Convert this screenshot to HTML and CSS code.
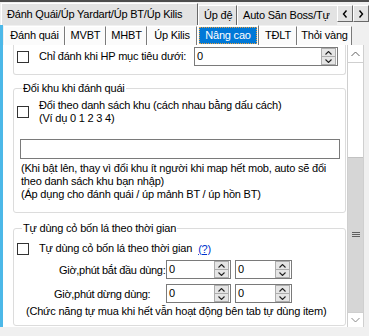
FILE: index.html
```html
<!DOCTYPE html>
<html lang="vi">
<head>
    <meta charset="utf-8">
    <title>Nâng cao</title>
    <link rel="stylesheet" href="styles.css">
</head>
<body>
<div class="window">
    <div class="topline"></div>
    <div class="main-tabs">
        <div class="main-tab-list">
            <div class="main-tab active t1">Đánh Quái/Úp Yardart/Úp BT/Úp Kilis</div>
            <div class="main-tab t2">Úp đệ</div>
            <div class="main-tab t3">Auto Săn Boss/Tự</div>
        </div>
        <div class="tab-arrows">
            <div class="arrow-btn"><svg width="6" height="8" viewBox="0 0 6 8"><polyline points="4.5,0.5 1.5,4 4.5,7.5" fill="none" stroke="#000" stroke-width="1.4"/></svg></div>
            <div class="arrow-btn"><svg width="6" height="8" viewBox="0 0 6 8"><polyline points="1.5,0.5 4.5,4 1.5,7.5" fill="none" stroke="#000" stroke-width="1.4"/></svg></div>
        </div>
    </div>
    <div class="frame">
        <div class="stripe"></div>
        <div class="frame-body">
            <div class="sub-tabs">
                <div class="sub-tab w61">Đánh quái</div>
                <div class="sub-tab w41">MVBT</div>
                <div class="sub-tab w41">MHBT</div>
                <div class="sub-tab w50">Úp Kilis</div>
                <div class="sub-tab w62 active"><span>Nâng cao</span></div>
                <div class="sub-tab w38">TĐLT</div>
                <div class="sub-tab w55">Thỏi vàng</div>
            </div>
            <div class="page-row">
                <div class="page">
                    <!-- nhóm trên, bị cuộn mất phần đầu -->
                    <div class="group-cut">
                        <div class="row">
                            <span class="check"></span>
                            <span class="check-label">Chỉ đánh khi HP mục tiêu dưới:</span>
                            <div class="num num-wide">
                                <div class="num-val">0</div>
                                <div class="num-spin">
                                    <div class="spin-btn"><svg width="7" height="4" viewBox="0 0 7 4"><polyline points="0.5,3.5 3.5,0.5 6.5,3.5" fill="none" stroke="#222" stroke-width="1.1"/></svg></div>
                                    <div class="spin-btn"><svg width="7" height="4" viewBox="0 0 7 4"><polyline points="0.5,0.5 3.5,3.5 6.5,0.5" fill="none" stroke="#222" stroke-width="1.1"/></svg></div>
                                </div>
                            </div>
                        </div>
                    </div>

                    <fieldset class="group g-zone">
                        <legend>Đổi khu khi đánh quái</legend>
                        <div class="check-row">
                            <span class="check"></span>
                            <span class="check-label">Đổi theo danh sách khu (cách nhau bằng dấu cách)<br>(Ví dụ 0 1 2 3 4)</span>
                        </div>
                        <div class="textbox"></div>
                        <div class="note">(Khi bật lên, thay vì đổi khu ít người khi map hết mob, auto sẽ đổi<br>theo danh sách khu bạn nhập)<br>(Áp dụng cho đánh quái / úp mảnh BT / úp hồn BT)</div>
                    </fieldset>

                    <fieldset class="group g-clover">
                        <legend>Tự dùng cỏ bốn lá theo thời gian</legend>
                        <div class="check-row single">
                            <span class="check"></span>
                            <span class="check-label">Tự dùng cỏ bốn lá theo thời gian</span>
                            <a class="help" href="#">(?)</a>
                        </div>
                        <div class="time-row">
                            <span class="time-label">Giờ,phút bắt đầu dùng:</span>
                            <div class="num num-a">
                                <div class="num-val">0</div>
                                <div class="num-spin">
                                    <div class="spin-btn"><svg width="7" height="4" viewBox="0 0 7 4"><polyline points="0.5,3.5 3.5,0.5 6.5,3.5" fill="none" stroke="#222" stroke-width="1.1"/></svg></div>
                                    <div class="spin-btn"><svg width="7" height="4" viewBox="0 0 7 4"><polyline points="0.5,0.5 3.5,3.5 6.5,0.5" fill="none" stroke="#222" stroke-width="1.1"/></svg></div>
                                </div>
                            </div>
                            <div class="num num-b">
                                <div class="num-val">0</div>
                                <div class="num-spin">
                                    <div class="spin-btn"><svg width="7" height="4" viewBox="0 0 7 4"><polyline points="0.5,3.5 3.5,0.5 6.5,3.5" fill="none" stroke="#222" stroke-width="1.1"/></svg></div>
                                    <div class="spin-btn"><svg width="7" height="4" viewBox="0 0 7 4"><polyline points="0.5,0.5 3.5,3.5 6.5,0.5" fill="none" stroke="#222" stroke-width="1.1"/></svg></div>
                                </div>
                            </div>
                        </div>
                        <div class="time-row">
                            <span class="time-label stop">Giờ,phút dừng dùng:</span>
                            <div class="num num-a">
                                <div class="num-val">0</div>
                                <div class="num-spin">
                                    <div class="spin-btn"><svg width="7" height="4" viewBox="0 0 7 4"><polyline points="0.5,3.5 3.5,0.5 6.5,3.5" fill="none" stroke="#222" stroke-width="1.1"/></svg></div>
                                    <div class="spin-btn"><svg width="7" height="4" viewBox="0 0 7 4"><polyline points="0.5,0.5 3.5,3.5 6.5,0.5" fill="none" stroke="#222" stroke-width="1.1"/></svg></div>
                                </div>
                            </div>
                            <div class="num num-b">
                                <div class="num-val">0</div>
                                <div class="num-spin">
                                    <div class="spin-btn"><svg width="7" height="4" viewBox="0 0 7 4"><polyline points="0.5,3.5 3.5,0.5 6.5,3.5" fill="none" stroke="#222" stroke-width="1.1"/></svg></div>
                                    <div class="spin-btn"><svg width="7" height="4" viewBox="0 0 7 4"><polyline points="0.5,0.5 3.5,3.5 6.5,0.5" fill="none" stroke="#222" stroke-width="1.1"/></svg></div>
                                </div>
                            </div>
                        </div>
                        <div class="note small">(Chức năng tự mua khi hết vẫn hoạt động bên tab tự dùng item)</div>
                    </fieldset>
                </div>
                <div class="vscroll">
                    <div class="sb-btn up"><svg width="9" height="6" viewBox="0 0 9 6"><polyline points="0.5,5 4.5,1 8.5,5" fill="none" stroke="#606060" stroke-width="1"/></svg></div>
                    <div class="sb-track"></div>
                    <div class="sb-thumb"><svg width="8" height="6" viewBox="0 0 8 6"><path d="M0 0.5H8M0 2.5H8M0 4.5H8" stroke="#606060" stroke-width="1"/></svg></div>
                    <div class="sb-btn down"><svg width="9" height="6" viewBox="0 0 9 6"><polyline points="0.5,1 4.5,5 8.5,1" fill="none" stroke="#8a8a8a" stroke-width="1"/></svg></div>
                </div>
                <div class="edge"></div>
            </div>
        </div>
    </div>
    <div class="bottom"></div>
</div>
</body>
</html>
```

FILE: styles.css
```css
* {
    box-sizing: border-box;
}
body {
    margin: 0;
    background-color: #f0f0f0;
    font-family: "Liberation Sans", Arial, sans-serif;
    font-size: 11px;
    letter-spacing: -0.2px;
    color: #000;
}
.window {
    width: 369px;
    height: 336px;
    overflow: hidden;
    display: flex;
    flex-direction: column;
}
.topline {
    height: 2px;
    background-color: #4d4d4d;
}

/* tab ngoài */
.main-tabs {
    height: 23px;
    display: flex;
    background-color: #f0f0f0;
}
.main-tab-list {
    flex: 1;
    display: flex;
    align-items: flex-end;
    overflow: hidden;
    padding-left: 1px;
}
.main-tab {
    flex-shrink: 0;
    height: 20px;
    line-height: 18px;
    padding: 0 5px;
    white-space: nowrap;
    background-color: #e3e3e3;
    border-top: 1px solid #fff;
    border-left: 1px solid #fff;
    border-right: 1px solid #696969;
}
.main-tab.active {
    height: 22px;
    line-height: 21px;
}
.main-tab.t1 {
    width: 197px;
}
.main-tab.t2 {
    width: 39px;
}
.main-tab.t3 {
    width: 110px;
}
.tab-arrows {
    display: flex;
    padding-top: 3px;
}
.arrow-btn {
    width: 16px;
    height: 17px;
    display: flex;
    align-items: center;
    justify-content: center;
    background-color: #e3e3e3;
    border: 1px solid;
    border-color: #fff #696969 #696969 #fff;
}

/* khung chính */
.frame {
    height: 302px;
    display: flex;
}
.stripe {
    width: 3px;
    background-color: #4cb8e8;
}
.frame-body {
    flex: 1;
    display: flex;
    flex-direction: column;
}
.sub-tabs {
    height: 20px;
    display: flex;
    align-items: flex-end;
    padding-left: 1px;
    background-color: #f0f0f0;
}
.sub-tab {
    height: 19px;
    line-height: 17px;
    text-align: center;
    white-space: nowrap;
    background-color: #fbfbfb;
    border-top: 1px solid #fff;
    border-left: 1px solid #fff;
    border-right: 1px solid #7a7a7a;
}
.sub-tab.active {
    height: 20px;
    padding: 1px 1px 1px 1px;
}
.sub-tab.active span {
    display: block;
    height: 17px;
    line-height: 16px;
    background-color: #0078d7;
    color: #fff;
    outline: 1px dotted #e8a040;
    outline-offset: -1px;
}
.w61 { width: 61px; }
.w41 { width: 41px; }
.w50 { width: 50px; }
.w62 { width: 62px; }
.w38 { width: 38px; }
.w55 { width: 55px; }

.page-row {
    flex: 1;
    display: flex;
}
.page {
    flex: 1;
    background-color: #fff;
    overflow: hidden;
    padding-left: 10px;
}

/* group box */
.group-cut {
    width: 333px;
    height: 30px;
    padding-top: 2px;
    border: 1px solid #dcdcdc;
    border-top: none;
    border-radius: 0 0 3px 3px;
}
.row {
    display: flex;
    align-items: center;
    height: 19px;
}
.group {
    width: 333px;
    margin: 0;
    padding: 0;
    border: 1px solid #dcdcdc;
    border-radius: 3px;
}
.group legend {
    margin-left: 8px;
    padding: 0 1px;
    line-height: 13px;
}
.g-zone {
    margin-top: 7px;
    padding-bottom: 11px;
}
.g-clover {
    margin-top: 9px;
    padding-bottom: 7px;
}
.check {
    flex-shrink: 0;
    width: 12px;
    height: 12px;
    margin-left: 3px;
    border: 1px solid #333;
    background-color: #fff;
}
.check-label {
    margin-left: 10px;
    line-height: 13px;
    white-space: nowrap;
}
.check-row {
    display: flex;
    align-items: center;
    margin-top: 4px;
}
.check-row.single {
    margin-top: 7px;
}
.help {
    margin-left: 6px;
    color: #0033cc;
}
.textbox {
    width: 320px;
    height: 20px;
    margin: 14px 0 0 6px;
    border: 1px solid #7a7a7a;
    background-color: #fff;
}
.note {
    margin: 3px 0 0 7px;
    line-height: 13px;
    white-space: nowrap;
}
.note.small {
    margin: 2px 0 0 12px;
}

/* numeric up-down */
.num {
    display: flex;
    height: 19px;
    border: 1px solid #7a7a7a;
    background-color: #fff;
}
.num-wide {
    width: 144px;
    margin-left: auto;
    margin-right: 7px;
}
.num-a {
    width: 65px;
}
.num-b {
    width: 57px;
    margin-left: 4px;
}
.num-val {
    flex: 1;
    padding-left: 2px;
    line-height: 17px;
}
.num-spin {
    width: 16px;
    display: flex;
    flex-direction: column;
    padding: 0 1px 0 0;
}
.spin-btn {
    flex: 1;
    display: flex;
    align-items: center;
    justify-content: center;
    background-color: #e5e5e5;
    border: 1px solid #adadad;
}
.spin-btn + .spin-btn {
    border-top: none;
}
.time-row {
    display: flex;
    align-items: center;
    margin-top: 5px;
}
.time-label {
    width: 152px;
    padding-left: 45px;
    letter-spacing: -0.3px;
    white-space: nowrap;
}
.time-label.stop {
    padding-left: 40px;
}

/* thanh cuộn */
.vscroll {
    width: 17px;
    display: flex;
    flex-direction: column;
    background-color: #fff;
    border-left: 1px solid #cfcfcf;
    border-right: 1px solid #cfcfcf;
}
.sb-btn {
    display: flex;
    align-items: center;
    justify-content: center;
    background-color: #fff;
}
.sb-btn.up {
    height: 18px;
    border-bottom: 1px solid #cfcfcf;
}
.sb-btn.down {
    height: 15px;
    border-top: 1px solid #cfcfcf;
}
.sb-track {
    height: 94px;
}
.sb-thumb {
    height: 155px;
    display: flex;
    align-items: center;
    justify-content: center;
    background-color: #d6d6d6;
    border-top: 1px solid #c2c2c2;
}
.edge {
    width: 5px;
    background-color: #f0f0f0;
}
.bottom {
    flex: 1;
    background-color: #f0f0f0;
}
```
